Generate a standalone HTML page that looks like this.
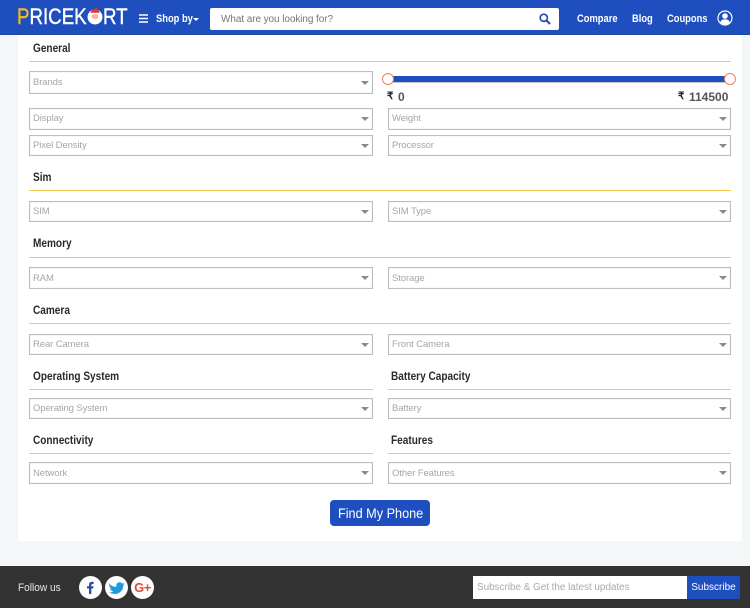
<!DOCTYPE html>
<html><head><meta charset="utf-8"><style>
*{box-sizing:border-box}
html,body{margin:0;padding:0}
body{width:750px;height:608px;position:relative;overflow:hidden;background:#f4f7f8;font-family:"Liberation Sans",sans-serif}
.a{position:absolute;white-space:nowrap}
.hd{position:absolute;left:0;top:0;width:750px;height:35px;background:#1f4fbf;border-bottom:1px solid #1a45aa}
.logo{top:4px;font-size:22px;line-height:26px;font-weight:normal;color:#fff;-webkit-text-stroke:.4px #fff;transform:scaleX(.85);transform-origin:left top}
.nav{color:#fff;font-size:11px;font-weight:bold;top:13px;line-height:13px;transform:scaleX(.85);transform-origin:left top}
.card{position:absolute;left:18px;top:35px;width:724px;height:506px;background:#fff}
.h{left:33px;font-size:11.5px;font-weight:bold;color:#2a2a2a;line-height:14px;transform:scaleX(.875);transform-origin:left top}
.l{position:absolute;height:1px;background:#fcc94f}
.s{position:absolute;border:1px solid #bdbdbd;background:#fff;box-shadow:inset 0 0 1px #ccc;color:#a6a6a6;font-size:9.5px;letter-spacing:-.1px;padding-left:3px}
.s:after{content:"";position:absolute;right:3px;top:50%;margin-top:-2px;border-left:4px solid transparent;border-right:4px solid transparent;border-top:4px solid #8a8a8a}
.ft{position:absolute;left:0;top:566px;width:750px;height:42px;background:#333}
.c{position:absolute;top:576px;width:23px;height:23px;border-radius:50%;background:#fff;text-align:center}
.p{font-size:12px;line-height:14px;font-weight:bold;color:#555;top:90px}
.r{font-size:10px;line-height:14px;font-weight:bold;color:#222;top:90px}
</style></head><body>
<div class="card"></div>
<div class="hd"></div>
<div class="a logo" style="left:17px"><span style="color:#fdb913;-webkit-text-stroke:.4px #fdb913">P</span>RICEK</div>
<div class="a logo" style="left:103px">RT</div>
<svg class="a" style="left:87px;top:7px" width="16" height="18" viewBox="0 0 16 18"><circle cx="8" cy="10" r="7.500" fill="#fff"/><path d="M2.500 7Q5 1.500 10 1L13.500 7Z" fill="#e0322b"/><ellipse cx="8" cy="9.500" rx="3.500" ry="2.600" fill="#f3b9a0"/><path d="M2 6.500h12" stroke="#fff" stroke-width="1.500"/></svg>
<svg class="a" style="left:139px;top:14px" width="10" height="9" viewBox="0 0 10 9"><path d="M0 1h9M0 4.500h9M0 8h9" stroke="#fff" stroke-width="1.400"/></svg>
<div class="a nav" style="left:156px">Shop by</div>
<div class="a" style="left:193px;top:18px;border-left:3px solid transparent;border-right:3px solid transparent;border-top:3px solid #fff"></div>
<div class="a" style="left:210px;top:8px;width:349px;height:22px;background:#fff;border-radius:2px;color:#777;font-size:10px;letter-spacing:-.08px;line-height:23px;padding-left:11px">What are you looking for?</div>
<svg class="a" style="left:539px;top:13px" width="12" height="12" viewBox="0 0 12 12"><circle cx="4.800" cy="4.800" r="3.600" fill="none" stroke="#1f4fbf" stroke-width="1.700"/><path d="M7.500 7.500L11 11" stroke="#1f4fbf" stroke-width="2"/></svg>
<div class="a nav" style="left:577px">Compare</div>
<div class="a nav" style="left:632px">Blog</div>
<div class="a nav" style="left:667px">Coupons</div>
<svg class="a" style="left:717px;top:10px" width="16" height="16" viewBox="0 0 16 16"><circle cx="8" cy="8" r="7" fill="#1f4fbf" stroke="#fff" stroke-width="1.200"/><circle cx="8" cy="6" r="2.800" fill="#fff"/><path d="M3.200 12.500Q4 9.300 8 9.300T12.800 12.500Q8 16.500 3.200 12.500Z" fill="#fff"/></svg>

<div class="a h" style="top:42px">General</div><div class="l" style="left:29px;top:61px;width:702px"></div>
<div class="s" style="left:29px;top:71px;width:344px;height:23px;line-height:21px">Brands</div>
<div class="a" style="left:388px;top:76px;width:342px;height:7px;background:#1f4fbf;border-bottom:1px solid #c4c8d0"></div>
<div class="a" style="left:382px;top:73px;width:12px;height:12px;border-radius:50%;background:#fff;border:1px solid #ef7f5a"></div>
<div class="a" style="left:724px;top:73px;width:12px;height:12px;border-radius:50%;background:#fff;border:1px solid #ef7f5a"></div>
<div class="a r" style="left:387px">₹</div><div class="a p" style="left:398px">0</div>
<div class="a r" style="left:678px">₹</div><div class="a p" style="left:689px">114500</div>
<div class="s" style="left:29px;top:108px;width:344px;height:22px;line-height:20px">Display</div>
<div class="s" style="left:388px;top:108px;width:343px;height:22px;line-height:20px">Weight</div>
<div class="s" style="left:29px;top:135px;width:344px;height:21px;line-height:19px">Pixel Density</div>
<div class="s" style="left:388px;top:135px;width:343px;height:21px;line-height:19px">Processor</div>

<div class="a h" style="top:171px">Sim</div><div class="l" style="left:29px;top:190px;width:702px"></div>
<div class="s" style="left:29px;top:201px;width:344px;height:21px;line-height:20px">SIM</div>
<div class="s" style="left:388px;top:201px;width:343px;height:21px;line-height:20px">SIM Type</div>

<div class="a h" style="top:237px">Memory</div><div class="l" style="left:29px;top:257px;width:702px"></div>
<div class="s" style="left:29px;top:267px;width:344px;height:22px;line-height:21px">RAM</div>
<div class="s" style="left:388px;top:267px;width:343px;height:22px;line-height:21px">Storage</div>

<div class="a h" style="top:304px">Camera</div><div class="l" style="left:29px;top:323px;width:702px"></div>
<div class="s" style="left:29px;top:334px;width:344px;height:21px;line-height:20px">Rear Camera</div>
<div class="s" style="left:388px;top:334px;width:343px;height:21px;line-height:20px">Front Camera</div>

<div class="a h" style="top:370px">Operating System</div><div class="l" style="left:29px;top:389px;width:344px"></div>
<div class="a h" style="top:370px;left:391px">Battery Capacity</div><div class="l" style="left:388px;top:389px;width:343px"></div>
<div class="s" style="left:29px;top:398px;width:344px;height:21px;line-height:20px">Operating System</div>
<div class="s" style="left:388px;top:398px;width:343px;height:21px;line-height:20px">Battery</div>

<div class="a h" style="top:434px">Connectivity</div><div class="l" style="left:29px;top:453px;width:344px"></div>
<div class="a h" style="top:434px;left:391px">Features</div><div class="l" style="left:388px;top:453px;width:343px"></div>
<div class="s" style="left:29px;top:462px;width:344px;height:22px;line-height:21px">Network</div>
<div class="s" style="left:388px;top:462px;width:343px;height:22px;line-height:21px">Other Features</div>

<div class="a" style="left:330px;top:500px;width:100px;height:26px;background:#1f4fbf;border-radius:4px"></div>
<div class="a" style="left:338px;top:506px;color:#fff;font-size:14px;line-height:14px;transform:scaleX(.905);transform-origin:left top">Find My Phone</div>

<div class="ft"></div>
<div class="a" style="left:18px;top:581px;color:#e6e6e6;font-size:11px;line-height:14px;transform:scaleX(.92);transform-origin:left top">Follow us</div>
<div class="c" style="left:79px"><svg width="23" height="23" viewBox="0 0 23 23"><path d="M10 18V12.500H8V10.300H10V8.800Q10 5.800 13 5.800H14.600V8H13.400Q12.300 8 12.300 9V10.300H14.500L14.200 12.500H12.300V18Z" fill="#2a4f9e"/></svg></div>
<div class="c" style="left:105px"><svg width="23" height="23" viewBox="0 0 23 23"><path d="M4 7.500Q7.500 11 11.200 11Q10.800 6.800 14.300 6.300Q16 6.200 17 7.500L19 6.700L18 8.700L19.500 8.200L18.200 10Q18 15.500 12.500 17.500Q8 18.700 4 16.500Q6.800 16.500 8.300 15.200Q5.800 15 5 13H6.700Q4.400 12 4.400 10L6 10.500Q3.500 9.200 4 7.500Z" fill="#1d9bd8"/></svg></div>
<div class="c" style="left:131px;color:#dc4a38;font-size:13px;font-weight:bold;line-height:23px;letter-spacing:-.5px">G+</div>
<div class="a" style="left:473px;top:576px;width:214px;height:23px;background:#fff;color:#aaa;font-size:10px;letter-spacing:-.06px;line-height:24px;padding-left:4px">Subscribe &amp; Get the latest updates</div>
<div class="a" style="left:687px;top:576px;width:53px;height:23px;background:#1f4fbf;color:#fff;font-size:10px;line-height:24px;text-align:center">Subscribe</div>
</body></html>
